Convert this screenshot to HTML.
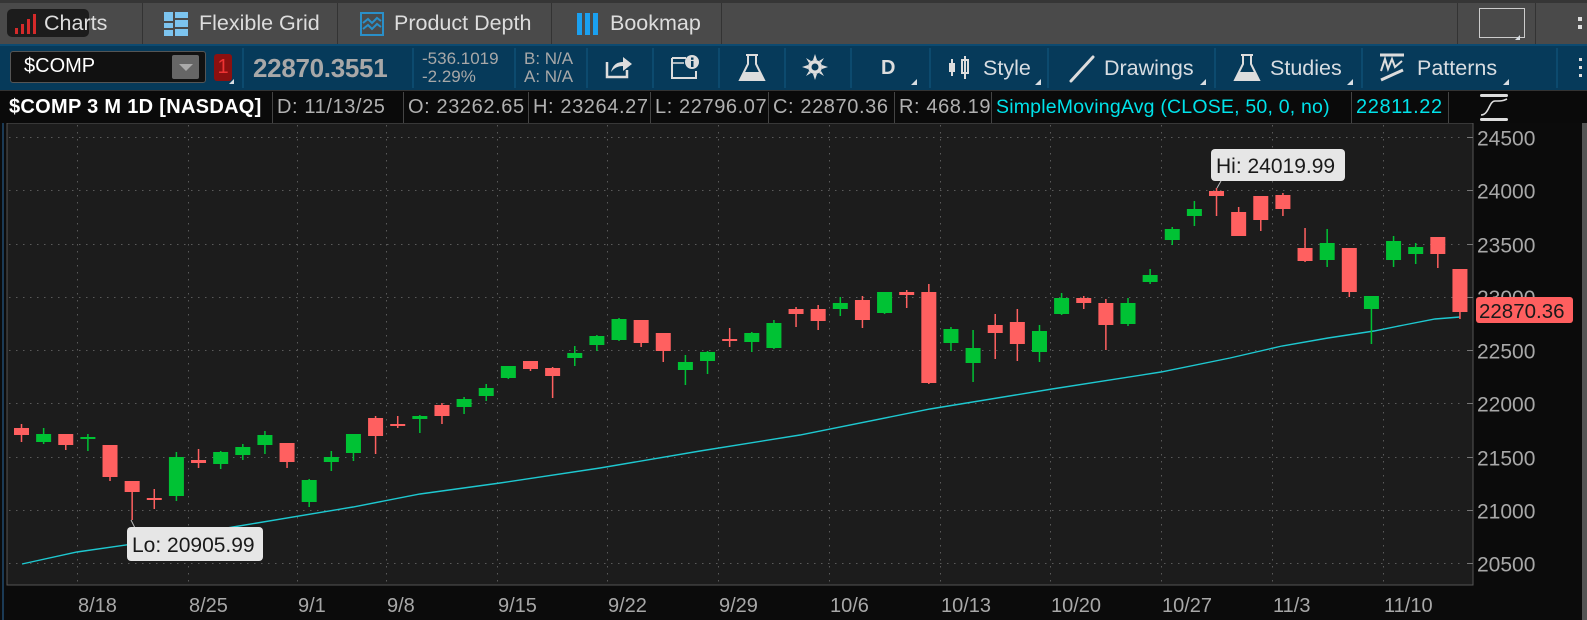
<!DOCTYPE html>
<html><head><meta charset="utf-8">
<style>
*{margin:0;padding:0;box-sizing:border-box}
body{width:1587px;height:620px;overflow:hidden;background:#0b0b0b;font-family:"Liberation Sans",sans-serif;position:relative}
.abs{position:absolute}
.tabbar{left:0;top:0;width:1587px;height:44px;background:#4a4a4a;border-top:3px solid #363636}
.tab{position:absolute;top:0;height:41px;display:flex;align-items:center;color:#ddd;font-size:21.5px}
.sep{position:absolute;width:1px;background:#333}
.tb{left:0;top:44px;width:1587px;height:46px;background:#063a5a;border-top:2px solid #0d4a70}
.tbs{position:absolute;top:2px;width:2px;height:40px;background:#0c4a6e}
.tt{position:absolute;color:#d8dde2;font-size:21.5px;top:10px}
.tri{position:absolute;width:0;height:0;border-left:7px solid transparent;border-bottom:7px solid #d8dde2}
.info{left:0;top:90px;width:1587px;height:33px;background:#0a0a0a;border-top:1px solid #333}
.cell{position:absolute;top:1px;height:31px;line-height:31px;font-size:20px;letter-spacing:0.6px;color:#b0b0b0;border-right:1px solid #444;white-space:nowrap;overflow:hidden;padding-left:4px}
</style></head><body>
<div class="abs tabbar">
 <div class="abs" style="left:7px;top:6px;width:82px;height:28px;background:#1c1c1c;border-radius:5px"></div>
 <div class="tab" style="left:14px">
  <svg width="24" height="22" viewBox="0 0 24 22"><rect x="1" y="15" width="3" height="6" fill="#d42a2a"/><rect x="7" y="11" width="3" height="10" fill="#d42a2a"/><rect x="13" y="6" width="3" height="15" fill="#d42a2a"/><rect x="19" y="1" width="3" height="20" fill="#d42a2a"/></svg>
  <span style="margin-left:6px">Charts</span></div>
 <div class="sep" style="left:142px;top:0;height:41px"></div>
 <div class="tab" style="left:164px">
  <svg width="24" height="24" viewBox="0 0 24 24"><rect x="0" y="0" width="9" height="9" fill="#7cc4ef"/><rect x="0" y="11" width="9" height="5" fill="#7cc4ef"/><rect x="0" y="18" width="9" height="6" fill="#7cc4ef"/><rect x="11" y="0" width="13" height="6" fill="#7cc4ef"/><rect x="11" y="8" width="13" height="7" fill="#7cc4ef"/><rect x="11" y="17" width="13" height="7" fill="#7cc4ef"/></svg>
  <span style="margin-left:11px">Flexible Grid</span></div>
 <div class="sep" style="left:337px;top:0;height:41px"></div>
 <div class="tab" style="left:360px">
  <svg width="24" height="24" viewBox="0 0 24 24"><rect x="1" y="1" width="22" height="22" fill="none" stroke="#2a8fc8" stroke-width="2"/><path d="M3 11 L8 7 L12 11 L17 6 L21 9" fill="none" stroke="#2a8fc8" stroke-width="2"/><path d="M3 17 L8 13 L12 17 L17 12 L21 15" fill="none" stroke="#2a8fc8" stroke-width="2"/></svg>
  <span style="margin-left:10px">Product Depth</span></div>
 <div class="sep" style="left:551px;top:0;height:41px"></div>
 <div class="tab" style="left:577px">
  <svg width="22" height="22" viewBox="0 0 22 22"><rect x="0" y="0" width="5" height="22" fill="#1aa0f0"/><rect x="8" y="0" width="5" height="22" fill="#1aa0f0"/><rect x="16" y="0" width="5" height="22" fill="#1aa0f0"/></svg>
  <span style="margin-left:11px">Bookmap</span></div>
 <div class="sep" style="left:721px;top:0;height:41px"></div>
 <div class="sep" style="left:1457px;top:0;height:41px"></div>
 <div class="abs" style="left:1479px;top:5px;width:46px;height:30px;border:1px solid #ccc"></div>
 <div class="tri" style="left:1515px;top:32px;border-left-width:5px;border-bottom-width:5px"></div>
 <div class="sep" style="left:1535px;top:0;height:41px"></div>
 <div class="abs" style="left:1578px;top:14px;width:4px;height:4px;background:#ddd;box-shadow:0 8px 0 #ddd"></div>
</div>

<div class="abs tb">
 <div class="abs" style="left:10px;top:5px;width:196px;height:32px;background:#111;border:1px solid #555;border-radius:3px"></div>
 <div class="tt" style="left:24px;top:9px;color:#fff;font-size:20px">$COMP</div>
 <div class="abs" style="left:172px;top:9px;width:27px;height:24px;background:#666;border-radius:2px"></div>
 <div class="abs" style="left:179px;top:18px;border-left:7px solid transparent;border-right:7px solid transparent;border-top:7px solid #aaa;width:0;height:0"></div>
 <div class="abs" style="left:214px;top:8px;width:18px;height:27px;background:#8b1010;border-radius:3px;color:#e33;font-size:20px;text-align:center;line-height:27px">1</div>
 <div class="tri" style="left:229px;top:33px;border-left-width:5px;border-bottom-width:5px"></div>
 <div class="tbs" style="left:242px"></div>
 <div class="tt" style="left:253px;top:7px;color:#a8a8a8;font-size:26px;font-weight:bold;letter-spacing:-0.3px">22870.3551</div>
 <div class="tbs" style="left:412px"></div>
 <div class="tt" style="left:422px;top:3px;color:#a8a8a8;font-size:17px">-536.1019</div>
 <div class="tt" style="left:422px;top:21px;color:#a8a8a8;font-size:17px">-2.29%</div>
 <div class="tbs" style="left:514px"></div>
 <div class="tt" style="left:524px;top:3px;color:#a8a8a8;font-size:17px">B: N/A</div>
 <div class="tt" style="left:524px;top:21px;color:#a8a8a8;font-size:17px">A: N/A</div>
 <div class="tbs" style="left:586px"></div>
 <svg class="abs" style="left:605px;top:8px" width="28" height="26" viewBox="0 0 28 26"><path d="M2 8 V23 H22 V16" fill="none" stroke="#ddd" stroke-width="2.5"/><path d="M6 18 C8 10 13 8 18 8 V3 L27 10 L18 17 V12 C13 12 9 14 6 18Z" fill="#ddd"/></svg>
 <div class="tbs" style="left:652px"></div>
 <svg class="abs" style="left:670px;top:8px" width="30" height="26" viewBox="0 0 30 26"><path d="M2 4 H16 M2 4 V24 H26 V17" fill="none" stroke="#ddd" stroke-width="2"/><path d="M2 9 H14" stroke="#ddd" stroke-width="1.5"/><circle cx="22" cy="8" r="7" fill="#ddd"/><rect x="21" y="7" width="2.5" height="6" fill="#063a5a"/><rect x="21" y="3.5" width="2.5" height="2.3" fill="#063a5a"/></svg>
 <div class="tbs" style="left:718px"></div>
 <svg class="abs" style="left:738px;top:7px" width="28" height="30" viewBox="0 0 28 30"><path d="M8 2 H20 M10 2 V11 L2 27 H26 L18 11 V2" fill="none" stroke="#ddd" stroke-width="2"/><path d="M6 19 H22 L26 27 H2Z" fill="#ddd"/></svg>
 <div class="tbs" style="left:784px"></div>
 <svg class="abs" style="left:802px;top:8px" width="26" height="26" viewBox="0 0 26 26"><g fill="#ddd"><circle cx="13" cy="13" r="7"/><path d="M13 0 L15 6 L11 6Z M13 26 L11 20 L15 20Z M0 13 L6 11 L6 15Z M26 13 L20 15 L20 11Z M4 4 L9 7 L7 9Z M22 22 L17 19 L19 17Z M22 4 L19 9 L17 7Z M4 22 L7 17 L9 19Z"/></g><circle cx="13" cy="13" r="3.5" fill="#063a5a"/></svg>
 <div class="tbs" style="left:850px"></div>
 <div class="tt" style="left:881px;top:11px;color:#ddd;font-weight:bold;font-size:20px">D</div>
 <div class="tri" style="left:911px;top:33px;border-left-width:6px;border-bottom-width:6px"></div>
 <div class="tbs" style="left:929px"></div>
 <svg class="abs" style="left:947px;top:9px" width="24" height="26" viewBox="0 0 24 26"><rect x="2" y="8" width="6" height="9" fill="#ddd"/><rect x="4" y="4" width="2" height="17" fill="#ddd"/><rect x="15" y="5" width="6" height="13" fill="none" stroke="#ddd" stroke-width="2"/><rect x="17" y="1" width="2" height="23" fill="#ddd"/></svg>
 <div class="tt" style="left:983px">Style</div>
 <div class="tri" style="left:1035px;top:33px;border-left-width:6px;border-bottom-width:6px"></div>
 <div class="tbs" style="left:1047px"></div>
 <svg class="abs" style="left:1068px;top:8px" width="28" height="30" viewBox="0 0 28 30"><path d="M3 27 L25 3" stroke="#ddd" stroke-width="3" stroke-linecap="round"/></svg>
 <div class="tt" style="left:1104px">Drawings</div>
 <div class="tri" style="left:1200px;top:33px;border-left-width:6px;border-bottom-width:6px"></div>
 <div class="tbs" style="left:1214px"></div>
 <svg class="abs" style="left:1233px;top:7px" width="28" height="30" viewBox="0 0 28 30"><path d="M8 2 H20 M10 2 V11 L2 27 H26 L18 11 V2" fill="none" stroke="#ddd" stroke-width="2"/><path d="M6 19 H22 L26 27 H2Z" fill="#ddd"/></svg>
 <div class="tt" style="left:1270px">Studies</div>
 <div class="tri" style="left:1347px;top:33px;border-left-width:6px;border-bottom-width:6px"></div>
 <div class="tbs" style="left:1361px"></div>
 <svg class="abs" style="left:1378px;top:7px" width="28" height="30" viewBox="0 0 28 30"><path d="M2 2 H26" stroke="#ddd" stroke-width="3"/><path d="M3 18 L7 6 L10 16 L14 6 L17 14 L24 8" fill="none" stroke="#ddd" stroke-width="2"/><path d="M3 27 L25 17" stroke="#ddd" stroke-width="3"/></svg>
 <div class="tt" style="left:1417px">Patterns</div>
 <div class="tri" style="left:1503px;top:33px;border-left-width:6px;border-bottom-width:6px"></div>
 <div class="tbs" style="left:1556px"></div>
 <div class="abs" style="left:1579px;top:12px;width:3px;height:3px;background:#ddd;box-shadow:0 8px 0 #ddd,0 16px 0 #ddd"></div>
</div>

<div class="abs info">
 <div class="cell" style="left:5px;width:268px;color:#fff;font-weight:bold;letter-spacing:0.3px">$COMP 3 M 1D [NASDAQ]</div>
 <div class="cell" style="left:273px;width:131px">D: 11/13/25</div>
 <div class="cell" style="left:404px;width:125px">O: 23262.65</div>
 <div class="cell" style="left:529px;width:122px">H: 23264.27</div>
 <div class="cell" style="left:651px;width:118px">L: 22796.07</div>
 <div class="cell" style="left:769px;width:126px">C: 22870.36</div>
 <div class="cell" style="left:895px;width:97px">R: 468.19</div>
 <div class="cell" style="left:992px;width:360px;color:#00e2ea;font-size:19.5px;letter-spacing:0.2px">SimpleMovingAvg (CLOSE, 50, 0, no)</div>
 <div class="cell" style="left:1352px;width:97px;color:#00e2ea">22811.22</div>
 <svg class="abs" style="left:1479px;top:2px" width="32" height="30" viewBox="0 0 32 30"><rect x="1" y="1" width="28" height="3" rx="1.5" fill="#ddd"/><rect x="1" y="25" width="28" height="3" rx="1.5" fill="#ddd"/><path d="M2 22 C10 22 10 8 16 8 S 24 8 28 6" fill="none" stroke="#ddd" stroke-width="1.6"/></svg>
</div>

<svg class="abs" style="left:0;top:123px" width="1587" height="497" viewBox="0 123 1587 497" font-family="Liberation Sans, sans-serif">
 <rect x="0" y="123" width="1587" height="497" fill="#0b0b0b"/>
 <rect x="7" y="123" width="1466" height="462" fill="#1c1c1c" stroke="#555" stroke-width="1"/>
 <line x1="3" y1="123" x2="3" y2="620" stroke="#1b3a55" stroke-width="2"/>
 <rect x="1582" y="123" width="5" height="497" fill="#555"/>
 <g id="grid" stroke="#5a5a5a" stroke-width="1" stroke-dasharray="1.5,5.5"></g>
 <g id="axis" fill="#a8a8a8" font-size="21"></g>
 <polyline fill="none" stroke="#1ec8d0" stroke-width="1.4" points="22,564 77,552 140,543 233,527 353,507 420,494 500,483 600,468 700,451 800,435 930,409 1052,389 1161,372 1230,358 1282,346 1328,338 1374,331 1404,325 1435,319 1460,317"/>
 <g id="candles"></g>
 <path d="M131 520 L135 528" stroke="#bbb" stroke-width="1"/>
 <rect x="127" y="527" width="136" height="34" rx="4" fill="#e6e6e6"/>
 <text x="132" y="552" font-size="21" fill="#1a1a1a">Lo: 20905.99</text>
 <path d="M1217 188 L1221 181" stroke="#bbb" stroke-width="1"/>
 <rect x="1211" y="149" width="134" height="32" rx="4" fill="#e6e6e6"/>
 <text x="1216" y="173" font-size="21" fill="#1a1a1a">Hi: 24019.99</text>
 <rect x="1476" y="297" width="97" height="26" rx="3" fill="#ff5f5f"/>
 <text x="1479" y="318" font-size="20.5" fill="#1a1a1a">22870.36</text>
</svg>
<script>
var ns="http://www.w3.org/2000/svg";
function el(p,t,a){var e=document.createElementNS(ns,t);for(var k in a)e.setAttribute(k,a[k]);p.appendChild(e);return e;}
var g=document.getElementById('grid'),ax=document.getElementById('axis');
var vx=[77,188,297,386,497,607,718,829,940,1050,1161,1272,1383];
var dl=["8/18","8/25","9/1","9/8","9/15","9/22","9/29","10/6","10/13","10/20","10/27","11/3","11/10"];
vx.forEach(function(x,i){el(g,'line',{x1:x+.5,y1:125,x2:x+.5,y2:584});var t=el(ax,'text',{x:x+1,y:612,'font-size':20});t.textContent=dl[i];});
var lv=["24500","24000","23500","23000","22500","22000","21500","21000","20500"];
for(var k=0;k<9;k++){var y=Math.round(137+53.25*k)+.5;el(g,'line',{x1:9,y1:y,x2:1465,y2:y});el(ax,'line',{x1:1467,y1:y,x2:1473,y2:y,stroke:'#777'});if(k!=3){var t=el(ax,'text',{x:1477,y:y+8});t.textContent=lv[k];}}
var t3=el(ax,'text',{x:1477,y:305});t3.textContent="23000";
var d=[
"r428 435 424 442","g434 442 428 444","r434 445 434 450","g437 439 434 451","r445 477 445 481","r481 492 481 520","r498 500 489 509","g457 496 452 501","r460 463 449 468","g452 464 451 469","g447 455 444 460","g435 445 431 454","r443 462 443 468","g480 502 479 507","g457 462 451 471","g434 453 434 461","r418 436 416 454","r424 426 416 428","g416 419 415 433","r405 416 403 424","g399 407 397 414","g388 396 384 401",
"g366 378 366 379","r361 369 361 371","r368 376 367 398","g353 358 346 366","g336 345 335 351","g319 340 318 341","r320 343 320 347","r333 351 333 362","g362 370 355 385","g352 361 351 374","r339 341 328 347","g333 342 332 352","g323 348 320 349","r309 314 307 327","r309 321 305 330","g303 309 297 316","r300 320 296 328","g292 313 292 314","r292 295 290 308","r292 383 284 384","g329 343 327 351","g348 363 330 382","r325 333 314 359","r322 344 309 361","g331 352 325 362","g298 314 293 315","r298 303 296 309","r303 325 299 350","g303 324 298 326","g275 282 269 284","g229 240 227 245","g209 216 201 226","r191 196 188 216","r212 236 207 236","r196 220 196 231","r195 209 193 216","r248 261 228 262","g243 260 229 267","r248 292 248 297","g296 309 296 344","g241 260 236 267","g247 254 243 264","r237 254 237 268","r269 312 269 319"];
var c=document.getElementById('candles');
d.forEach(function(s,i){var col=s[0]=='r'?'#ff6060':'#00c234';var v=s.slice(1).split(' ').map(Number);var x=21.5+i*22.13;
el(c,'rect',{x:x-0.75,y:v[2],width:1.5,height:v[3]-v[2],fill:col});
el(c,'rect',{x:x-7.5,y:v[0],width:15,height:Math.max(2,v[1]-v[0]),fill:col});});
</script>
</body></html>
